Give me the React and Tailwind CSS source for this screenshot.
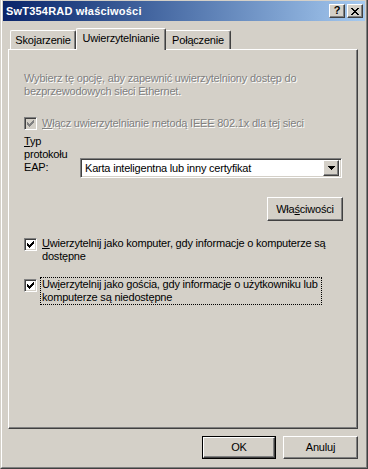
import React from "react";

const raised =
  "border border-t-white border-l-white border-r-[#404040] border-b-[#404040] shadow-[inset_-1px_-1px_0_#808080]";
const sunken =
  "border border-t-[#808080] border-l-[#808080] border-r-white border-b-white shadow-[inset_1px_1px_0_#404040,inset_-1px_-1px_0_#d4d0c8]";

function Check({ color = "#000" }) {
  const px = [
    [6, 0],
    [5, 1], [6, 1],
    [0, 2], [4, 2], [5, 2], [6, 2],
    [0, 3], [1, 3], [3, 3], [4, 3], [5, 3],
    [0, 4], [1, 4], [2, 4], [3, 4], [4, 4],
    [1, 5], [2, 5], [3, 5],
    [2, 6],
  ];
  return (
    <svg width="7" height="7" viewBox="0 0 7 7" shapeRendering="crispEdges">
      {px.map(([x, y], i) => (
        <rect key={i} x={x} y={y} width="1" height="1" fill={color} />
      ))}
    </svg>
  );
}

function CheckBox({ disabled }) {
  return (
    <div
      className={
        "w-[13px] h-[13px] shrink-0 flex items-center justify-center " +
        sunken +
        (disabled ? " bg-[#d4d0c8]" : " bg-white")
      }
    >
      <Check color={disabled ? "#808080" : "#000"} />
    </div>
  );
}

export default function App() {
  return (
    <div className="w-[368px] h-[469px] bg-[#d4d0c8] border border-t-0 border-l-[#d4d0c8] border-r-[#404040] border-b-[#404040] flex flex-col font-['Liberation_Sans',Arial,sans-serif] text-[11px] leading-[13px] text-black overflow-hidden">
      <div className="flex-1 flex flex-col border border-t-0 border-l-white border-r-[#808080] border-b-[#808080] px-px pb-px">
        {/* Title bar */}
        <div className="h-[20px] mt-px flex items-center pl-[3px] pr-[2px] bg-gradient-to-r from-[#0a246a] to-[#a6caf0]">
          <span className="text-white font-bold text-[11px] tracking-[0.2px]">SwT354RAD właściwości</span>
          <div className="ml-auto flex gap-[1px]">
            <div className={"w-[16px] h-[14px] bg-[#d4d0c8] flex items-center justify-center " + raised}>
              <span className="font-bold text-[11px] leading-none text-black -mt-px">?</span>
            </div>
            <div className={"w-[16px] h-[14px] bg-[#d4d0c8] flex items-center justify-center ml-[1px] " + raised}>
              <svg width="8" height="7" viewBox="0 0 8 7" shapeRendering="crispEdges">
                {[
                  [0, 0], [1, 0], [6, 0], [7, 0],
                  [1, 1], [2, 1], [5, 1], [6, 1],
                  [2, 2], [3, 2], [4, 2], [5, 2],
                  [3, 3], [4, 3],
                  [2, 4], [3, 4], [4, 4], [5, 4],
                  [1, 5], [2, 5], [5, 5], [6, 5],
                  [0, 6], [1, 6], [6, 6], [7, 6],
                ].map(([x, y], i) => (
                  <rect key={i} x={x} y={y} width="1" height="1" fill="#000" />
                ))}
              </svg>
            </div>
          </div>
        </div>

        {/* Body */}
        <div className="flex-1 flex flex-col pl-[5px] pr-[5px] pt-[7px] tracking-[-0.2px]">
          {/* Tabs */}
          <div className="flex items-end h-[21px] pl-[2px] relative z-10">
            <div className="w-[66px] h-[19px] flex items-center justify-center border-l border-t border-l-white border-t-white border-r border-r-[#404040] rounded-tl-[2px] rounded-tr-[2px] shadow-[inset_-1px_0_0_#808080]">
              Skojarzenie
            </div>
            <div className="w-[90px] h-[22px] -mb-px bg-[#d4d0c8] flex items-start pt-[3px] justify-center border-l border-t border-l-white border-t-white border-r border-r-[#404040] rounded-tl-[2px] rounded-tr-[2px] shadow-[inset_-1px_0_0_#808080]">
              Uwierzytelnianie
            </div>
            <div className="w-[65px] h-[19px] flex items-center justify-center border-t border-t-white border-r border-r-[#404040] rounded-tr-[2px] shadow-[inset_-1px_0_0_#808080]">
              Połączenie
            </div>
          </div>

          {/* Panel */}
          <div className="w-[350px] h-[380px] border border-t-white border-l-white border-r-[#404040] border-b-[#404040] shadow-[inset_-1px_-1px_0_#808080] flex flex-col pl-[15px] pr-[14px]">
            <div className="mt-[22px] text-[#808080] [text-shadow:1px_1px_0_#fff] whitespace-nowrap">
              Wybierz tę opcję, aby zapewnić uwierzytelniony dostęp do
              <br />
              bezprzewodowych sieci Ethernet.
            </div>

            <div className="mt-[19px] flex items-center gap-[5px]">
              <CheckBox disabled />
              <span className="text-[#808080] [text-shadow:1px_1px_0_#fff] whitespace-nowrap">
                <span className="underline">W</span>łącz uwierzytelnianie metodą IEEE 802.1x dla tej sieci
              </span>
            </div>

            <div className="mt-[5px] flex items-start">
              <div className="w-[56px]">
                <span className="underline">T</span>yp
                <br />
                protokołu
                <br />
                EAP:
              </div>
              <div className={"mt-[23px] w-[262px] h-[20px] bg-white flex items-center p-[2px] " + sunken}>
                <span className="pl-[2px] flex-1 whitespace-nowrap">Karta inteligentna lub inny certyfikat</span>
                <div className={"w-[16px] h-[16px] bg-[#d4d0c8] flex items-center justify-center " + raised}>
                  <svg width="7" height="4" viewBox="0 0 7 4" shapeRendering="crispEdges">
                    <rect x="0" y="0" width="7" height="1" fill="#000" />
                    <rect x="1" y="1" width="5" height="1" fill="#000" />
                    <rect x="2" y="2" width="3" height="1" fill="#000" />
                    <rect x="3" y="3" width="1" height="1" fill="#000" />
                  </svg>
                </div>
              </div>
            </div>

            <div className="mt-[19px] flex justify-end">
              <div className={"w-[76px] h-[24px] flex items-center justify-center " + raised}>
                Wła<span className="underline">ś</span>ciwości
              </div>
            </div>

            <div className="mt-[17px] flex items-start gap-[5px]">
              <CheckBox />
              <div className="-mt-[1px] whitespace-nowrap">
                <span className="underline">U</span>wierzytelnij jako komputer, gdy informacje o komputerze są
                <br />
                dostępne
              </div>
            </div>

            <div className="mt-[14px] flex items-start gap-[3px]">
              <div className="mt-[2px]">
                <CheckBox />
              </div>
              <div className="border border-dotted border-black px-px whitespace-nowrap w-[282px]">
                Uw<span className="underline">i</span>erzytelnij jako gościa, gdy informacje o użytkowniku lub
                <br />
                komputerze są niedostępne
              </div>
            </div>
          </div>

          {/* Buttons */}
          <div className="mt-[7px] flex justify-end gap-[7px] pr-[2px]">
            <div className="border border-black">
              <div className={"w-[72px] h-[21px] flex items-center justify-center " + raised}>OK</div>
            </div>
            <div className={"w-[75px] h-[23px] flex items-center justify-center " + raised}>Anuluj</div>
          </div>
        </div>
      </div>
    </div>
  );
}
